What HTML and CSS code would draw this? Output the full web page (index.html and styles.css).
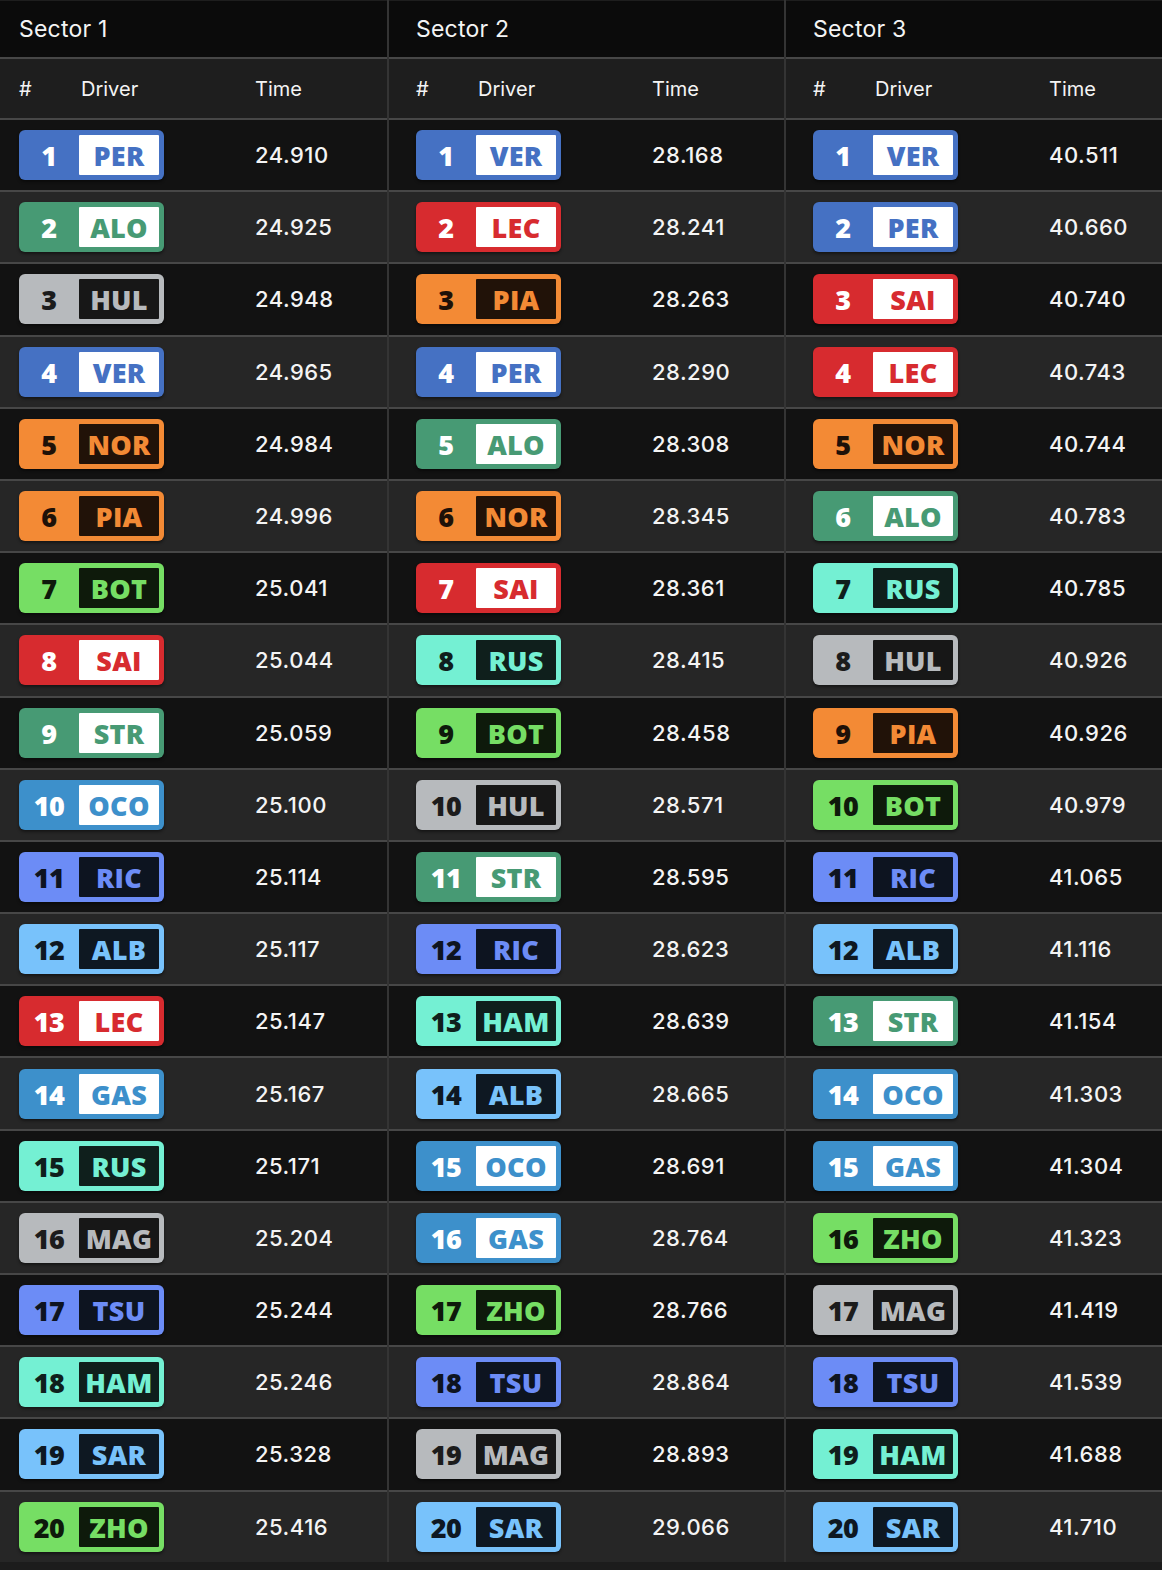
FILE: index.html
```html
<!DOCTYPE html>
<html lang="en">
<head>
<meta charset="utf-8">
<title>Sector Times</title>
<link rel="stylesheet" href="styles.css">
</head>
<body>
<div class="board">
  <section class="sector">
    <div class="title">Sector 1</div>
    <div class="heads"><span>#</span><span>Driver</span><span>Time</span></div>
    <div class="rows">
      <div class="row"><span class="badge rbr"><span class="pos">1</span><span class="code">PER</span></span><span class="time">24.910</span></div>
      <div class="row"><span class="badge amr"><span class="pos">2</span><span class="code">ALO</span></span><span class="time">24.925</span></div>
      <div class="row"><span class="badge haas"><span class="pos">3</span><span class="code">HUL</span></span><span class="time">24.948</span></div>
      <div class="row"><span class="badge rbr"><span class="pos">4</span><span class="code">VER</span></span><span class="time">24.965</span></div>
      <div class="row"><span class="badge mcl"><span class="pos">5</span><span class="code">NOR</span></span><span class="time">24.984</span></div>
      <div class="row"><span class="badge mcl"><span class="pos">6</span><span class="code">PIA</span></span><span class="time">24.996</span></div>
      <div class="row"><span class="badge sau"><span class="pos">7</span><span class="code">BOT</span></span><span class="time">25.041</span></div>
      <div class="row"><span class="badge fer"><span class="pos">8</span><span class="code">SAI</span></span><span class="time">25.044</span></div>
      <div class="row"><span class="badge amr"><span class="pos">9</span><span class="code">STR</span></span><span class="time">25.059</span></div>
      <div class="row"><span class="badge alp"><span class="pos">10</span><span class="code">OCO</span></span><span class="time">25.100</span></div>
      <div class="row"><span class="badge rb"><span class="pos">11</span><span class="code">RIC</span></span><span class="time">25.114</span></div>
      <div class="row"><span class="badge wil"><span class="pos">12</span><span class="code">ALB</span></span><span class="time">25.117</span></div>
      <div class="row"><span class="badge fer"><span class="pos">13</span><span class="code">LEC</span></span><span class="time">25.147</span></div>
      <div class="row"><span class="badge alp"><span class="pos">14</span><span class="code">GAS</span></span><span class="time">25.167</span></div>
      <div class="row"><span class="badge mer"><span class="pos">15</span><span class="code">RUS</span></span><span class="time">25.171</span></div>
      <div class="row"><span class="badge haas"><span class="pos">16</span><span class="code">MAG</span></span><span class="time">25.204</span></div>
      <div class="row"><span class="badge rb"><span class="pos">17</span><span class="code">TSU</span></span><span class="time">25.244</span></div>
      <div class="row"><span class="badge mer"><span class="pos">18</span><span class="code">HAM</span></span><span class="time">25.246</span></div>
      <div class="row"><span class="badge wil"><span class="pos">19</span><span class="code">SAR</span></span><span class="time">25.328</span></div>
      <div class="row"><span class="badge sau"><span class="pos">20</span><span class="code">ZHO</span></span><span class="time">25.416</span></div>
    </div>
  </section>
  <section class="sector">
    <div class="title">Sector 2</div>
    <div class="heads"><span>#</span><span>Driver</span><span>Time</span></div>
    <div class="rows">
      <div class="row"><span class="badge rbr"><span class="pos">1</span><span class="code">VER</span></span><span class="time">28.168</span></div>
      <div class="row"><span class="badge fer"><span class="pos">2</span><span class="code">LEC</span></span><span class="time">28.241</span></div>
      <div class="row"><span class="badge mcl"><span class="pos">3</span><span class="code">PIA</span></span><span class="time">28.263</span></div>
      <div class="row"><span class="badge rbr"><span class="pos">4</span><span class="code">PER</span></span><span class="time">28.290</span></div>
      <div class="row"><span class="badge amr"><span class="pos">5</span><span class="code">ALO</span></span><span class="time">28.308</span></div>
      <div class="row"><span class="badge mcl"><span class="pos">6</span><span class="code">NOR</span></span><span class="time">28.345</span></div>
      <div class="row"><span class="badge fer"><span class="pos">7</span><span class="code">SAI</span></span><span class="time">28.361</span></div>
      <div class="row"><span class="badge mer"><span class="pos">8</span><span class="code">RUS</span></span><span class="time">28.415</span></div>
      <div class="row"><span class="badge sau"><span class="pos">9</span><span class="code">BOT</span></span><span class="time">28.458</span></div>
      <div class="row"><span class="badge haas"><span class="pos">10</span><span class="code">HUL</span></span><span class="time">28.571</span></div>
      <div class="row"><span class="badge amr"><span class="pos">11</span><span class="code">STR</span></span><span class="time">28.595</span></div>
      <div class="row"><span class="badge rb"><span class="pos">12</span><span class="code">RIC</span></span><span class="time">28.623</span></div>
      <div class="row"><span class="badge mer"><span class="pos">13</span><span class="code">HAM</span></span><span class="time">28.639</span></div>
      <div class="row"><span class="badge wil"><span class="pos">14</span><span class="code">ALB</span></span><span class="time">28.665</span></div>
      <div class="row"><span class="badge alp"><span class="pos">15</span><span class="code">OCO</span></span><span class="time">28.691</span></div>
      <div class="row"><span class="badge alp"><span class="pos">16</span><span class="code">GAS</span></span><span class="time">28.764</span></div>
      <div class="row"><span class="badge sau"><span class="pos">17</span><span class="code">ZHO</span></span><span class="time">28.766</span></div>
      <div class="row"><span class="badge rb"><span class="pos">18</span><span class="code">TSU</span></span><span class="time">28.864</span></div>
      <div class="row"><span class="badge haas"><span class="pos">19</span><span class="code">MAG</span></span><span class="time">28.893</span></div>
      <div class="row"><span class="badge wil"><span class="pos">20</span><span class="code">SAR</span></span><span class="time">29.066</span></div>
    </div>
  </section>
  <section class="sector">
    <div class="title">Sector 3</div>
    <div class="heads"><span>#</span><span>Driver</span><span>Time</span></div>
    <div class="rows">
      <div class="row"><span class="badge rbr"><span class="pos">1</span><span class="code">VER</span></span><span class="time">40.511</span></div>
      <div class="row"><span class="badge rbr"><span class="pos">2</span><span class="code">PER</span></span><span class="time">40.660</span></div>
      <div class="row"><span class="badge fer"><span class="pos">3</span><span class="code">SAI</span></span><span class="time">40.740</span></div>
      <div class="row"><span class="badge fer"><span class="pos">4</span><span class="code">LEC</span></span><span class="time">40.743</span></div>
      <div class="row"><span class="badge mcl"><span class="pos">5</span><span class="code">NOR</span></span><span class="time">40.744</span></div>
      <div class="row"><span class="badge amr"><span class="pos">6</span><span class="code">ALO</span></span><span class="time">40.783</span></div>
      <div class="row"><span class="badge mer"><span class="pos">7</span><span class="code">RUS</span></span><span class="time">40.785</span></div>
      <div class="row"><span class="badge haas"><span class="pos">8</span><span class="code">HUL</span></span><span class="time">40.926</span></div>
      <div class="row"><span class="badge mcl"><span class="pos">9</span><span class="code">PIA</span></span><span class="time">40.926</span></div>
      <div class="row"><span class="badge sau"><span class="pos">10</span><span class="code">BOT</span></span><span class="time">40.979</span></div>
      <div class="row"><span class="badge rb"><span class="pos">11</span><span class="code">RIC</span></span><span class="time">41.065</span></div>
      <div class="row"><span class="badge wil"><span class="pos">12</span><span class="code">ALB</span></span><span class="time">41.116</span></div>
      <div class="row"><span class="badge amr"><span class="pos">13</span><span class="code">STR</span></span><span class="time">41.154</span></div>
      <div class="row"><span class="badge alp"><span class="pos">14</span><span class="code">OCO</span></span><span class="time">41.303</span></div>
      <div class="row"><span class="badge alp"><span class="pos">15</span><span class="code">GAS</span></span><span class="time">41.304</span></div>
      <div class="row"><span class="badge sau"><span class="pos">16</span><span class="code">ZHO</span></span><span class="time">41.323</span></div>
      <div class="row"><span class="badge haas"><span class="pos">17</span><span class="code">MAG</span></span><span class="time">41.419</span></div>
      <div class="row"><span class="badge rb"><span class="pos">18</span><span class="code">TSU</span></span><span class="time">41.539</span></div>
      <div class="row"><span class="badge mer"><span class="pos">19</span><span class="code">HAM</span></span><span class="time">41.688</span></div>
      <div class="row"><span class="badge wil"><span class="pos">20</span><span class="code">SAR</span></span><span class="time">41.710</span></div>
    </div>
  </section>
</div>
</body>
</html>
```
FILE: styles.css
```css
html, body {
  margin: 0;
  padding: 0;
  overflow: hidden;
  background: #1c1c1c;
}

body {
  font-family: Inter, "Noto Sans", "Liberation Sans", sans-serif;
  color: #f4f4f4;
}

.board {
  display: grid;
  grid-template-columns: repeat(3, 397px);
  margin-left: -10px;
  width: 1191px;
}

.sector {
  border-left: 2px solid #343434;
  display: flex;
  flex-direction: column;
}

.title {
  height: 56px;
  border-top: 1px solid #1e1e1e;
  border-bottom: 2px solid #474747;
  background: #0b0b0b;
  padding-left: 27px;
  display: flex;
  align-items: center;
  font-size: 23px;
  font-weight: 400;
  letter-spacing: 0.2px;
}

.heads {
  height: 59px;
  border-bottom: 2px solid #474747;
  background: #1e1e1e;
  padding-left: 27px;
  display: grid;
  grid-template-columns: 62px 174px 1fr;
  align-items: center;
  font-size: 20px;
  font-weight: 400;
}

.row {
  height: 70.2px;
  border-bottom: 2px solid #474747;
  background: #121212;
  padding-left: 27px;
  display: grid;
  grid-template-columns: 236px 1fr;
  align-items: center;
}

.row:nth-child(even) {
  background: #262626;
}

.row:last-child {
  border-bottom: 0;
}

.time {
  font-size: 22px;
  font-weight: 500;
  letter-spacing: 0.5px;
}

.badge {
  box-sizing: border-box;
  width: 145px;
  height: 50px;
  border-radius: 6px;
  padding: 5px 5px 5px 0;
  display: flex;
  box-shadow: 0 2px 3px rgba(0, 0, 0, 0.45);
  font-family: "Open Sans", "Noto Sans", sans-serif;
  font-weight: 800;
  font-size: 27px;
  line-height: 41px;
}

.pos {
  width: 60px;
  text-align: center;
  letter-spacing: -0.5px;
}

.code {
  flex: 1;
  text-align: center;
  border-radius: 1px;
  letter-spacing: 0.3px;
  line-height: 41px;
  height: 40px;
}

/* Red Bull */
.rbr { background: #4571c3; color: #fff; }
.rbr .code { background: #fff; color: #4571c3; }
/* Aston Martin */
.amr { background: #479a74; color: #fff; }
.amr .code { background: #fff; color: #479a74; }
/* Ferrari */
.fer { background: #d72b2f; color: #fff; }
.fer .code { background: #fff; color: #d72b2f; }
/* Alpine */
.alp { background: #3d90cb; color: #fff; }
.alp .code { background: #fff; color: #3d90cb; }
/* Haas */
.haas { background: #b7babd; color: #1c1c1c; }
.haas .code { background: #171717; color: #b7babd; }
/* McLaren */
.mcl { background: #f38a35; color: #1e1108; }
.mcl .code { background: #211208; color: #f38a35; }
/* Sauber */
.sau { background: #76de64; color: #0e1a0b; }
.sau .code { background: #0e1a0b; color: #76de64; }
/* RB */
.rb { background: #6c8cf6; color: #0e1420; }
.rb .code { background: #0d1420; color: #6c8cf6; }
/* Williams */
.wil { background: #78c2fb; color: #0e1822; }
.wil .code { background: #0e1822; color: #78c2fb; }
/* Mercedes */
.mer { background: #74f0d3; color: #0f1f1c; }
.mer .code { background: #0f1f1c; color: #74f0d3; }
```
